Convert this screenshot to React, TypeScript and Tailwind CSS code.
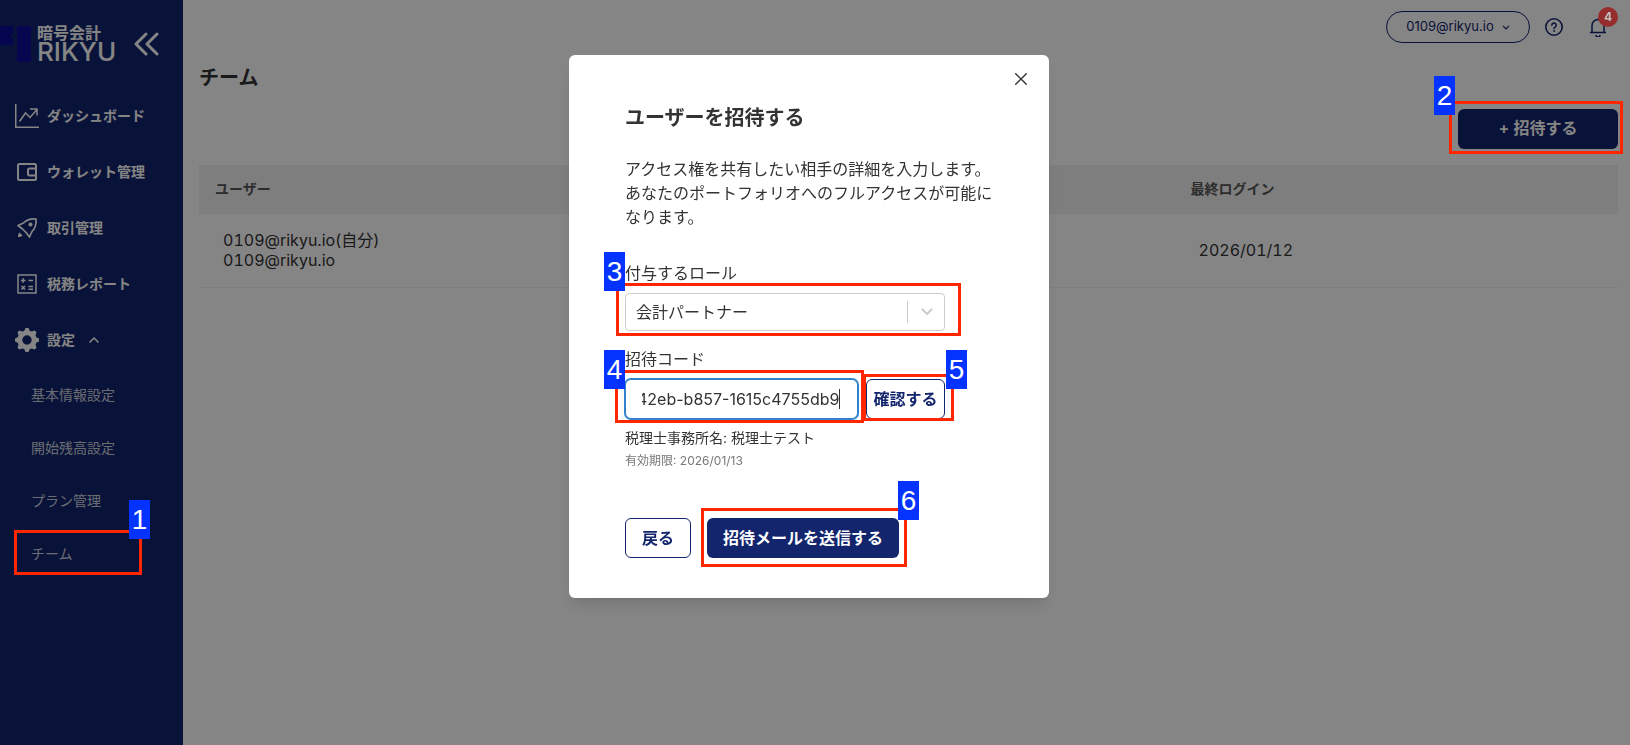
import { useEffect, useRef, type ReactNode } from "react";

const TAG = "absolute z-30 flex h-[39px] w-[21px] items-center justify-center bg-[#0433ff] font-['Liberation_Sans',sans-serif] text-[28px] leading-none text-white";
const FRAME = "pointer-events-none absolute z-20 border-3 border-[#ff2600]";

function Callout({ n, frame, tag }: { n: number; frame: string; tag: string }) {
  return (
    <>
      <span className={`${FRAME} ${frame}`} />
      <span className={`${TAG} ${tag}`}>{n}</span>
    </>
  );
}

function Logo() {
  return (
    <div className="flex items-start gap-1.5">
      <svg width="31" height="36" viewBox="0 0 31 36" className="shrink-0" aria-hidden="true">
        <path d="M0 0h13v7l-2 1v3l2 1v7H0z" fill="#0d0d99" />
        <path d="M17 0h14v36H17z" fill="#0d0d99" />
      </svg>
      <div className="text-white">
        <div className="text-base leading-[14px] font-semibold">暗号会計</div>
        <div className="text-[26px] leading-6 font-medium">RIKYU</div>
      </div>
    </div>
  );
}

function NavItem({ icon, children }: { icon: ReactNode; children: ReactNode }) {
  return (
    <a href="#" className="flex h-14 items-center gap-2 pl-[15px] text-sm font-semibold text-white">
      <span className="flex w-6 justify-center">{icon}</span>
      {children}
    </a>
  );
}

function Sidebar() {
  return (
    <aside className="w-[183px] shrink-0 bg-[#12256d]">
      <div className="flex items-start justify-between pt-[26px] pr-6 pb-6">
        <Logo />
        <button aria-label="メニューを閉じる" className="mt-1.5 text-white">
          <svg width="25" height="24" viewBox="0 0 25 24" fill="none" stroke="currentColor" strokeWidth="3" strokeLinecap="round" strokeLinejoin="round">
            <path d="M12 2 2 12l10 10M23 2 13 12l10 10" />
          </svg>
        </button>
      </div>
      <nav>
        <NavItem
          icon={
            <svg width="24" height="24" viewBox="0 0 24 24" fill="none" stroke="currentColor" strokeWidth="1.5">
              <path d="M.75 0v23.25H24" />
              <path d="M4.500 17.500 10.500 9l4.500 4.500L22 5.500M15 5h7v6.500" />
            </svg>
          }
        >
          ダッシュボード
        </NavItem>
        <NavItem
          icon={
            <svg width="20" height="18" viewBox="0 0 20 18" fill="none" stroke="currentColor" strokeWidth="2" strokeLinejoin="round">
              <path d="M19 5V2.500A1.500 1.500 0 0 0 17.500 1h-15A1.500 1.500 0 0 0 1 2.500v13A1.500 1.500 0 0 0 2.500 17h15a1.500 1.500 0 0 0 1.500-1.500V13" />
              <path d="M19 5.500h-6.500a1.500 1.500 0 0 0-1.500 1.500v4a1.500 1.500 0 0 0 1.500 1.500H19z" />
            </svg>
          }
        >
          ウォレット管理
        </NavItem>
        <NavItem
          icon={
            <svg width="20" height="20" viewBox="0 0 20 20" fill="none" stroke="currentColor" strokeWidth="1.700" strokeLinejoin="round">
              <path d="M1 7.500 6.500 5C9.500 1.800 14 .6 19 1c.4 5-.8 9.500-4 12.500L12.500 19l-3.500-4.500L5.500 11z" />
              <circle cx="13.500" cy="6.500" r="2" fill="currentColor" stroke="none" />
              <path d="M1 19c0-2 .3-3.500 1.500-4.500L5.500 17.500C4.500 18.700 3 19 1 19z" fill="currentColor" stroke="none" />
            </svg>
          }
        >
          取引管理
        </NavItem>
        <NavItem
          icon={
            <svg width="20" height="20" viewBox="0 0 20 20" fill="none" stroke="currentColor" strokeWidth="1.500">
              <path d="M1 1h18v18H1zM4 6.500h4.500M6.200 4.200v4.600M11.500 6.500H16M4.500 12l3.500 3.500M8 12l-3.500 3.500M11.500 12.500H16M11.500 15.300H16" />
            </svg>
          }
        >
          税務レポート
        </NavItem>
        <NavItem
          icon={
            <svg width="24" height="24" viewBox="0 0 24 24" fill="currentColor" fillRule="evenodd">
              <path d="M10.500 0h3l1.200 2.800 1.800.8 3.300-1 1.700 1.700-1 3.200.8 1.800 2.700 1.200v3l-2.700 1.200-.8 1.800 1 3.200-1.700 1.700-3.300-1-1.800.8L13.500 24h-3l-1.200-2.800-1.800-.8-3.300 1-1.700-1.700 1-3.200-.8-1.800L0 13.500v-3l2.700-1.200.8-1.800-1-3.200 1.700-1.700 3.300 1 1.800-.8zM12 7.300a4.700 4.700 0 1 0 0 9.400 4.700 4.700 0 0 0 0-9.400z" />
            </svg>
          }
        >
          設定
          <svg width="10" height="6" viewBox="0 0 10 6" fill="none" stroke="currentColor" strokeWidth="1.500" className="ml-1.5">
            <path d="M.5 5.500 5 1l4.500 4.500" />
          </svg>
        </NavItem>
        <div className="text-sm text-[#cbd0dc]">
          <a href="#" className="flex h-[53px] items-center pl-[31px]">基本情報設定</a>
          <a href="#" className="flex h-[53px] items-center pl-[31px]">開始残高設定</a>
          <a href="#" className="flex h-[53px] items-center pl-[31px]">プラン管理</a>
          <a href="#" className="relative flex h-[53px] items-center pl-[31px]">
            チーム
            <Callout n={1} frame="top-[3px] left-3.5 h-[45px] w-32" tag="-top-[27px] left-[129px]" />
          </a>
        </div>
      </nav>
    </aside>
  );
}

function Header() {
  return (
    <header className="flex items-center justify-end pt-[11px] pr-[23px] text-[#12256d]">
      <button className="flex h-8 w-36 items-center justify-center gap-2 rounded-full border border-[#12256d] text-[13px]">
        0109@rikyu.io
        <svg width="8" height="5" viewBox="0 0 8 5" fill="none" stroke="currentColor" strokeWidth="1.200">
          <path d="m1 .8 3 3 3-3" />
        </svg>
      </button>
      <button aria-label="ヘルプ" className="ml-[15px]">
        <svg width="18" height="18" viewBox="0 0 18 18" fill="none" stroke="currentColor" strokeWidth="1.600" strokeLinecap="round">
          <circle cx="9" cy="9" r="8.200" />
          <path d="M6.800 7.200a2.200 2.200 0 1 1 3.300 1.900c-.8.500-1.100.8-1.100 1.500" />
          <circle cx="9" cy="13" r=".6" fill="currentColor" strokeWidth=".6" />
        </svg>
      </button>
      <button aria-label="お知らせ" className="relative ml-[26px]">
        <svg width="18" height="19" viewBox="0 0 18 19" fill="none" stroke="currentColor" strokeWidth="1.500" strokeLinejoin="round">
          <path d="M1 14.500h16M3 14.500V7.500a6 6 0 0 1 12 0v7M7 17a2 2 0 0 0 4 0" />
        </svg>
        <span className="absolute -top-[11px] left-[9px] z-20 flex h-5 w-5 items-center justify-center rounded-full bg-[#962d2d] text-xs font-bold text-[#c0c0c0]">4</span>
      </button>
    </header>
  );
}

function TeamPage() {
  return (
    <main className="min-w-0 flex-1 bg-white">
      <Header />
      <div className="px-4 pr-3">
        <h1 className="pt-5 text-xl leading-[30px] font-semibold text-[#333]">チーム</h1>
        <div className="mt-4 flex justify-end">
          <div className="relative">
            <button className="h-10 w-40 rounded-md bg-[#12256d] pb-0.5 text-base font-semibold text-white">+ 招待する</button>
            <Callout n={2} frame="-top-2 -left-[9px] h-[53px] w-[174px]" tag="-top-[33px] -left-6" />
          </div>
        </div>
        <table className="mt-4 w-full table-fixed text-left text-[#333] tabular-nums">
          <thead className="bg-[#f2f2f2] text-sm text-[#555]">
            <tr className="h-[49px]">
              <th className="w-11/16 px-4 pb-0.5 font-semibold">ユーザー</th>
              <th className="px-4 pb-0.5 font-semibold">最終ログイン</th>
            </tr>
          </thead>
          <tbody>
            <tr className="h-[73px] border-b border-[#edf2f7]">
              <td className="px-6 leading-5">
                0109@rikyu.io(自分)
                <br />
                0109@rikyu.io
              </td>
              <td className="px-6 leading-5">2026/01/12</td>
            </tr>
          </tbody>
        </table>
      </div>
    </main>
  );
}

function InviteDialog() {
  const codeInput = useRef<HTMLInputElement>(null);

  // Keep the end of a long code in view.
  useEffect(() => {
    const el = codeInput.current;
    if (el) el.scrollLeft = el.scrollWidth;
  }, []);

  return (
    <div className="fixed inset-0 z-10 flex items-start justify-center bg-black/48">
      <div role="dialog" aria-labelledby="invite-title" className="relative mt-[55px] -ml-3 w-[480px] rounded-md bg-white px-14 pt-12 pb-10 text-[#333] shadow-lg">
        <button aria-label="閉じる" className="absolute top-[18px] right-[22px]">
          <svg width="12" height="12" viewBox="0 0 12 12" fill="none" stroke="currentColor" strokeWidth="1.400" strokeLinecap="round">
            <path d="m.7.7 10.600 10.600M11.300.7.700 11.300" />
          </svg>
        </button>
        <h2 id="invite-title" className="text-xl leading-[30px] font-bold">ユーザーを招待する</h2>
        <p className="mt-6 leading-6">アクセス権を共有したい相手の詳細を入力します。あなたのポートフォリオへのフルアクセスが可能になります。</p>

        <form className="mt-8">
          <label htmlFor="role" className="block leading-6">付与するロール</label>
          <div className="relative mt-2 w-80">
            <select id="role" className="block h-[38px] w-full appearance-none rounded border border-[#ccc] bg-white pl-2.5 text-base">
              <option>会計パートナー</option>
            </select>
            <span className="pointer-events-none absolute inset-y-2 right-0 flex w-[38px] items-center justify-center border-l border-[#ccc] text-[#ccc]">
              <svg width="12" height="8" viewBox="0 0 12 8" fill="none" stroke="currentColor" strokeWidth="2.200" strokeLinecap="round">
                <path d="m1.500 1.500 4.500 4.500 4.500-4.500" />
              </svg>
            </span>
            <Callout n={3} frame="-top-2.5 -left-[9px] h-[53px] w-[345px]" tag="-top-[41px] -left-[21px]" />
          </div>

          <label htmlFor="code" className="mt-4 block leading-6">招待コード</label>
          <div className="mt-2 flex w-80 gap-2">
            <div className="relative min-w-0 flex-1">
              <input ref={codeInput} id="code" defaultValue="42eb-b857-1615c4755db9" className="block h-10 w-full rounded-md border border-[#3182ce] bg-white pr-[18px] pl-4 text-base ring-1 ring-[#3182ce] outline-none" />
              <span className="absolute top-2.5 right-[18px] h-5 w-px bg-[#333]" />
              <Callout n={4} frame="-top-[9px] -left-2.5 h-[53px] w-[249px]" tag="-top-[29px] -left-[21px]" />
            </div>
            <div className="relative">
              <button type="button" className="h-10 w-[79px] rounded-md border border-[#12256d] text-base font-semibold text-[#12256d]">確認する</button>
              <Callout n={5} frame="-top-[5px] -left-[3px] h-[47px] w-[91px]" tag="-top-[29px] left-20" />
            </div>
          </div>
          <p className="mt-2 text-sm leading-[21px]">税理士事務所名: 税理士テスト</p>
          <p className="mt-1 text-xs leading-[18px] text-[#777]">有効期限: 2026/01/13</p>

          <div className="mt-12 flex gap-4">
            <button type="button" className="h-10 rounded-md border border-[#12256d] px-4 text-base font-semibold text-[#12256d]">戻る</button>
            <div className="relative">
              <button type="submit" className="h-10 rounded-md bg-[#12256d] px-4 text-base font-semibold text-white">招待メールを送信する</button>
              <Callout n={6} frame="-top-2.5 -right-2 -left-1.5 h-[59px]" tag="-top-[37px] -right-5" />
            </div>
          </div>
        </form>
      </div>
    </div>
  );
}

export default function App() {
  return (
    <div className="flex min-h-screen font-['Inter','Noto_Sans_CJK_JP',sans-serif]">
      <Sidebar />
      <TeamPage />
      <InviteDialog />
    </div>
  );
}
